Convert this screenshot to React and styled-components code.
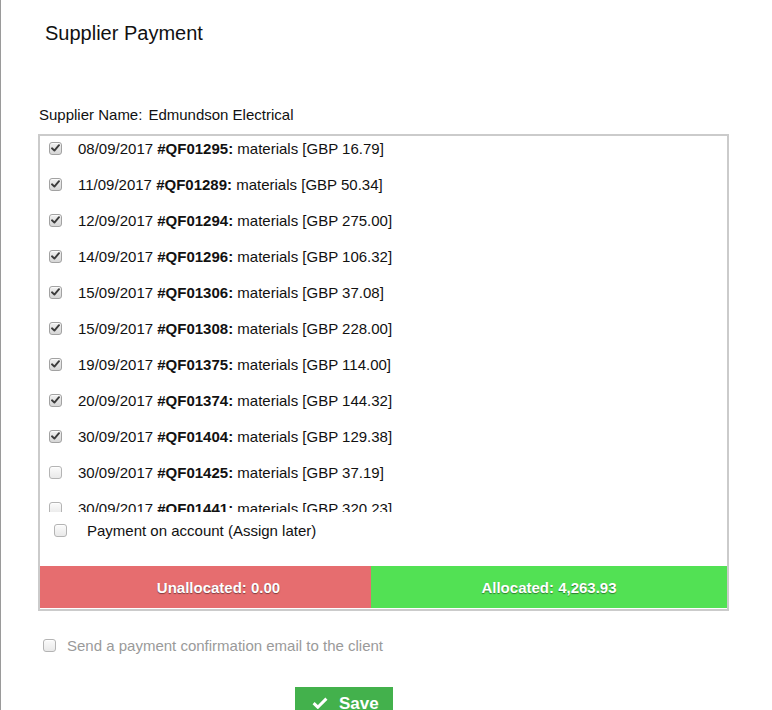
import styled, { createGlobalStyle } from "styled-components";

const GlobalStyle = createGlobalStyle`
  html, body {
    margin: 0;
    padding: 0;
    background: #fff;
  }
  body {
    font-family: "Liberation Sans", Arial, Helvetica, sans-serif;
    color: #111;
  }
`;

const invoices = [
  { date: "08/09/2017", ref: "#QF01295", amount: "16.79", checked: true },
  { date: "11/09/2017", ref: "#QF01289", amount: "50.34", checked: true },
  { date: "12/09/2017", ref: "#QF01294", amount: "275.00", checked: true },
  { date: "14/09/2017", ref: "#QF01296", amount: "106.32", checked: true },
  { date: "15/09/2017", ref: "#QF01306", amount: "37.08", checked: true },
  { date: "15/09/2017", ref: "#QF01308", amount: "228.00", checked: true },
  { date: "19/09/2017", ref: "#QF01375", amount: "114.00", checked: true },
  { date: "20/09/2017", ref: "#QF01374", amount: "144.32", checked: true },
  { date: "30/09/2017", ref: "#QF01404", amount: "129.38", checked: true },
  { date: "30/09/2017", ref: "#QF01425", amount: "37.19", checked: false },
  { date: "30/09/2017", ref: "#QF01441", amount: "320.23", checked: false },
];

const Check = ({ checked }) => (
  <CheckBox $checked={checked}>
    {checked && (
      <svg width="9" height="8" viewBox="0 0 9 8">
        <path d="M1 4.3 L3.4 6.6 L8 1.2" fill="none" stroke="#3c3c3c" strokeWidth="1.9" strokeLinecap="round" strokeLinejoin="round" />
      </svg>
    )}
  </CheckBox>
);

const App = () => {
  return (
    <Page>
      <GlobalStyle />
      <Title>Supplier Payment</Title>
      <SupplierLine>
        <span>Supplier Name:</span>
        <span>Edmundson Electrical</span>
      </SupplierLine>
      <Panel>
        <InvoiceList>
          {invoices.map((inv) => (
            <InvoiceRow key={inv.ref}>
              <Check checked={inv.checked} />
              <span>
                {inv.date} <b>{inv.ref}:</b> materials [GBP {inv.amount}]
              </span>
            </InvoiceRow>
          ))}
        </InvoiceList>
        <AccountRow>
          <Check checked={false} />
          <span>Payment on account (Assign later)</span>
        </AccountRow>
        <Totals>
          <TotalCell $tone="red">Unallocated: 0.00</TotalCell>
          <TotalCell $tone="green">Allocated: 4,263.93</TotalCell>
        </Totals>
      </Panel>
      <EmailRow>
        <Check checked={false} />
        <span>Send a payment confirmation email to the client</span>
      </EmailRow>
      <SaveButton>
        <svg width="16" height="12" viewBox="0 0 16 12">
          <path d="M1.6 6.2 L5.8 10.2 L14.4 1.6" fill="none" stroke="#fff" strokeWidth="3" strokeLinejoin="miter" />
        </svg>
        Save
      </SaveButton>
    </Page>
  );
};

const Page = styled.div`
  min-height: 100vh;
  box-sizing: border-box;
  border-left: 1px solid #9a9a9a;
  padding: 21px 0 0 0;
  overflow: hidden;
`;

const Title = styled.h1`
  margin: 0 0 0 44px;
  font-size: 20px;
  line-height: 24px;
  font-weight: normal;
  color: #111;
`;

const SupplierLine = styled.div`
  margin: 60px 0 0 38px;
  font-size: 15px;
  line-height: 20px;
  display: flex;
  gap: 6px;
`;

const Panel = styled.div`
  margin: 9px 0 0 37px;
  width: 691px;
  box-sizing: border-box;
  border: 2px solid #cbcbcb;
  padding-bottom: 1px;
`;

const InvoiceList = styled.div`
  height: 376px;
  overflow: hidden;
  padding: 1px 0 0 9px;
  box-sizing: border-box;
`;

const InvoiceRow = styled.label`
  display: flex;
  align-items: center;
  gap: 16px;
  height: 22px;
  margin-bottom: 14px;
  font-size: 15px;
  color: #111;
  white-space: nowrap;

  b {
    font-weight: bold;
  }
`;

const AccountRow = styled.label`
  display: flex;
  align-items: center;
  gap: 20px;
  height: 22px;
  margin: 7px 0 0 14px;
  font-size: 15px;
  color: #111;
`;

const CheckBox = styled.span`
  display: inline-flex;
  align-items: center;
  justify-content: center;
  flex: none;
  width: 13px;
  height: 13px;
  box-sizing: border-box;
  border: 1px solid ${(p) => (p.$checked ? "#a2a2a2" : "#b4b4b4")};
  border-radius: 3px;
  background: ${(p) =>
    p.$checked
      ? "linear-gradient(#f0f0f0, #d6d6d6)"
      : "linear-gradient(#fbfbfb, #e9e9e9)"};
  box-shadow: inset 0 1px 0 rgba(255, 255, 255, 0.7);
`;

const Totals = styled.div`
  display: flex;
  height: 42px;
  margin-top: 25px;
`;

const TotalCell = styled.div`
  display: flex;
  align-items: center;
  justify-content: center;
  box-sizing: border-box;
  font-size: 15px;
  font-weight: bold;
  color: #fff;
  text-shadow: 0 1px 1px rgba(0, 0, 0, 0.45);
  background: ${(p) => (p.$tone === "red" ? "#e66d6f" : "#52e154")};
  ${(p) =>
    p.$tone === "red"
      ? "width: 331px; padding-left: 26px;"
      : "flex: 1;"}
`;

const EmailRow = styled.label`
  display: flex;
  align-items: center;
  gap: 11px;
  height: 22px;
  margin: 23px 0 0 42px;
  font-size: 15px;
  color: #9a9a9a;
`;

const SaveButton = styled.button`
  display: flex;
  align-items: flex-start;
  gap: 11px;
  margin: 31px 0 0 294px;
  width: 98px;
  height: 34px;
  padding: 7px 0 0 17px;
  box-sizing: border-box;
  border: none;
  border-radius: 0;
  background: #43b14c;
  color: #fff;
  font-family: "Liberation Sans", Arial, sans-serif;
  font-size: 17px;
  font-weight: bold;
  cursor: pointer;

  svg {
    margin-top: 3px;
  }
`;

export default App;
